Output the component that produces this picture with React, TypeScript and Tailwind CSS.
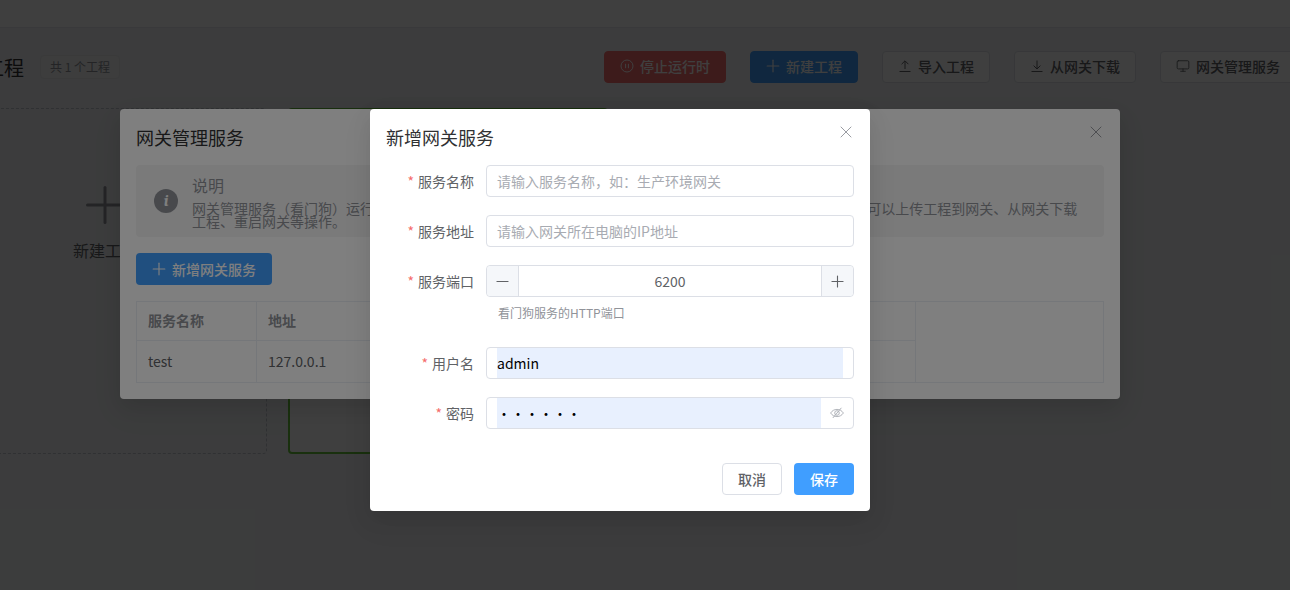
import { Minus, Monitor, Plus, X } from "lucide-react";
import type { ReactNode } from "react";

const font = { fontFamily: '"Noto Sans CJK SC", "Noto Sans", sans-serif' };

function PauseIcon() {
  return (
    <svg viewBox="0 0 14 14" className="h-[14px] w-[14px]" fill="none" stroke="currentColor" strokeWidth="1">
      <circle cx="7" cy="7" r="6" />
      <path d="M5.6 4.8v4.4M8.4 4.8v4.4" />
    </svg>
  );
}

function UploadIcon() {
  return (
    <svg viewBox="0 0 14 14" className="h-[14px] w-[14px]" fill="none" stroke="currentColor" strokeWidth="1">
      <path d="M1.5 12.5h11M7 10V2M3.6 5.2 7 1.8l3.4 3.4" />
    </svg>
  );
}

function DownloadIcon() {
  return (
    <svg viewBox="0 0 14 14" className="h-[14px] w-[14px]" fill="none" stroke="currentColor" strokeWidth="1">
      <path d="M1.5 12.5h11M7 1.5v8M3.6 6.6 7 10l3.4-3.4" />
    </svg>
  );
}

function HideIcon() {
  return (
    <svg viewBox="0 0 14 14" className="h-[14px] w-[14px] text-[#a8abb2]" fill="none" stroke="currentColor" strokeWidth="0.9">
      <path d="M.6 7C2.2 4.600 4.400 3.400 7 3.400s4.800 1.200 6.400 3.600C11.800 9.400 9.600 10.600 7 10.600S2.200 9.400.6 7Z" />
      <circle cx="7" cy="7" r="2.300" />
      <path d="M11.400 1.800 2.800 12" />
    </svg>
  );
}

function ButtonPlus() {
  return <Plus className="-mx-[3px] h-5 w-5" strokeWidth={1.4} />;
}

function ToolButton({ icon, label, className }: { icon: ReactNode; label: string; className: string }) {
  return (
    <button className={`flex h-8 shrink-0 items-center gap-[6px] rounded-[4px] border px-[15px] pb-[1px] text-sm font-medium ${className}`}>
      {icon}
      {label}
    </button>
  );
}

function Field({ label, children, className = "mb-[18px]" }: { label: string; children: ReactNode; className?: string }) {
  return (
    <div className={`flex ${className}`}>
      <label className="mr-3 flex h-8 w-[88px] shrink-0 items-center justify-end text-sm text-[#606266]">
        <span className="mr-1 text-[#f56c6c]">*</span>
        {label}
      </label>
      <div className="min-w-0 flex-1">{children}</div>
    </div>
  );
}

function TextInput({ placeholder }: { placeholder: string }) {
  return (
    <div className="flex h-8 items-center rounded-[4px] border border-[#dcdfe6] bg-white px-[10px]">
      <input
        placeholder={placeholder}
        className="h-full w-full bg-transparent text-sm text-[#606266] outline-none placeholder:text-[#a8abb2]"
      />
    </div>
  );
}

function DialogHeader({ title }: { title: string }) {
  return (
    <div className="flex h-[40px] items-start justify-between">
      <h2 className="text-lg leading-[24px] text-[#303133]">{title}</h2>
      <X className="-mr-[2px] -mt-[3px] h-5 w-5 text-[#909399]" strokeWidth={1.1} />
    </div>
  );
}

function App() {
  return (
    <div style={font} className="relative h-[590px] w-[1290px] overflow-hidden bg-[#f0f2f5]">
      {/* page behind the dialogs */}
      <div className="h-[28px] border-b border-[#e4e7ed] bg-white" />
      <div className="-ml-[16px] flex h-[80px] w-[1312px] items-center justify-between pb-[3px]">
        <div className="flex items-center gap-4">
          <h1 className="mt-[2px] text-xl leading-7 text-[#303133]">工程</h1>
          <span className="flex h-6 items-center rounded-[4px] border border-[#e9e9eb] bg-[#f4f4f5] px-[9px] text-xs text-[#909399]">
            共 1 个工程
          </span>
        </div>
        <div className="flex gap-6">
          <ToolButton icon={<PauseIcon />} label="停止运行时" className="border-[#f56c6c] bg-[#f56c6c] text-white" />
          <ToolButton icon={<ButtonPlus />} label="新建工程" className="border-[#409eff] bg-[#409eff] text-white" />
          <ToolButton icon={<UploadIcon />} label="导入工程" className="border-[#dcdfe6] bg-white text-[#606266]" />
          <ToolButton icon={<DownloadIcon />} label="从网关下载" className="border-[#dcdfe6] bg-white text-[#606266]" />
          <ToolButton icon={<Monitor className="h-[14px] w-[14px]" strokeWidth={1.5} />} label="网关管理服务" className="border-[#dcdfe6] bg-white text-[#606266]" />
        </div>
      </div>
      <div className="-ml-[53px] flex gap-[21px]">
        <div className="flex h-[346px] w-[320px] flex-col items-center justify-center rounded-[4px] border border-dashed border-[#c0c4cc] pb-[125px] pr-[4px]">
          <Plus className="h-[60px] w-[60px] text-[#909399]" strokeWidth={1.2} />
          <span className="mt-[3px] text-base leading-6 text-[#606266]">新建工程</span>
        </div>
        <div className="h-[346px] w-[320px] rounded-[4px] border-2 border-[#67c23a] bg-white" />
      </div>

      {/* first dialog */}
      <div className="absolute inset-0 bg-black/50" />
      <div className="absolute left-[120px] top-[109px] h-[290px] w-[1000px] rounded-[4px] bg-white p-4 shadow-[0_12px_32px_4px_rgba(0,0,0,0.04),0_8px_20px_rgba(0,0,0,0.08)]">
        <DialogHeader title="网关管理服务" />
        <div className="flex h-[72px] items-center gap-[14px] rounded-[4px] bg-[#f4f4f5] px-[18px] text-[#909399]">
          <span className="flex h-6 w-6 shrink-0 items-center justify-center rounded-full bg-[#909399] font-serif text-base font-bold italic text-white">i</span>
          <div className="w-[890px]">
            <p className="mb-[7px] text-base leading-[20px]">说明</p>
            <p className="text-sm leading-[13px]">
              网关管理服务（看门狗）运行在网关所在电脑上的 后台服务，用于管理网关进程的启停。配置看门狗服务后，可以上传工程到网关、从网关下载工程、重启网关等操作。
            </p>
          </div>
        </div>
        <button className="mt-4 flex h-8 items-center gap-[6px] rounded-[4px] bg-[#409eff] px-4 pb-[1px] text-sm font-medium text-white">
          <ButtonPlus />
          新增网关服务
        </button>
        <div className="mt-4 flex h-[82px] border border-[#ebeef5] text-sm text-[#606266]">
          <div className="w-[120px] border-r border-[#ebeef5]">
            <div className="flex h-[39px] items-center border-b border-[#ebeef5] px-[11px] pb-[2px] font-bold text-[#909399]">服务名称</div>
            <div className="flex h-[41px] items-center px-[11px] pb-[2px]">test</div>
          </div>
          <div className="w-[659px] border-r border-[#ebeef5]">
            <div className="flex h-[39px] items-center border-b border-[#ebeef5] px-[11px] pb-[2px] font-bold text-[#909399]">地址</div>
            <div className="flex h-[41px] items-center px-[11px] pb-[2px]">127.0.0.1</div>
          </div>
          <div className="flex-1" />
        </div>
      </div>

      {/* second dialog */}
      <div className="absolute inset-0 bg-black/50" />
      <div className="absolute left-[370px] top-[109px] h-[402px] w-[500px] rounded-[4px] bg-white p-4 shadow-[0_12px_32px_4px_rgba(0,0,0,0.04),0_8px_20px_rgba(0,0,0,0.08)]">
        <DialogHeader title="新增网关服务" />
        <Field label="服务名称">
          <TextInput placeholder="请输入服务名称，如：生产环境网关" />
        </Field>
        <Field label="服务地址">
          <TextInput placeholder="请输入网关所在电脑的IP地址" />
        </Field>
        <Field label="服务端口">
          <div className="flex h-8 items-center rounded-[4px] border border-[#dcdfe6] text-sm text-[#606266]">
            <span className="flex h-full w-8 items-center justify-center rounded-l-[4px] border-r border-[#dcdfe6] bg-[#f5f7fa]">
              <Minus className="h-[19px] w-[19px]" strokeWidth={1.4} />
            </span>
            <span className="flex-1 text-center">6200</span>
            <span className="flex h-full w-8 items-center justify-center rounded-r-[4px] border-l border-[#dcdfe6] bg-[#f5f7fa]">
              <Plus className="h-[19px] w-[19px]" strokeWidth={1.4} />
            </span>
          </div>
          <p className="h-[32px] pl-3 pt-[8px] text-xs leading-4 text-[#909399]">看门狗服务的HTTP端口</p>
        </Field>
        <Field label="用户名">
          <div className="flex h-8 items-center rounded-[4px] border border-[#dcdfe6] px-[10px]">
            <input readOnly value="admin" className="h-full w-full bg-[#e8f0fe] text-sm text-black outline-none" />
          </div>
        </Field>
        <Field label="密码" className="">
          <div className="flex h-8 items-center rounded-[4px] border border-[#dcdfe6] pl-[10px]">
            <input readOnly type="password" value="123456" className="h-full min-w-0 flex-1 bg-[#e8f0fe] text-sm text-black outline-none" />
            <span className="flex w-8 justify-center">
              <HideIcon />
            </span>
          </div>
        </Field>
        <div className="mt-[34px] flex justify-end gap-3">
          <button className="h-8 w-[60px] rounded-[4px] border border-[#dcdfe6] bg-white text-sm font-medium text-[#606266]">取消</button>
          <button className="h-8 w-[60px] rounded-[4px] bg-[#409eff] text-sm font-medium text-white">保存</button>
        </div>
      </div>
    </div>
  );
}

export default App;
